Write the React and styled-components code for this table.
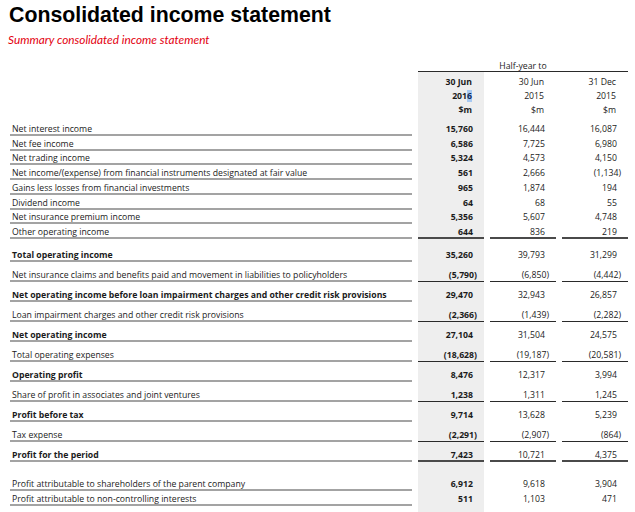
import React from 'react';
import styled, { createGlobalStyle } from 'styled-components';

const Global = createGlobalStyle`
  html, body { margin: 0; padding: 0; background: #fff; }
  body { font-family: "Open Sans", Lato, sans-serif; color: #1b1b1b; }
`;

const Page = styled.div`
  width: 635px;
  height: 512px;
  overflow: hidden;
  display: flex;
  flex-direction: column;
`;

const Title = styled.h1`
  margin: 5px 0 0 9px;
  font-family: "Liberation Sans", Arial, sans-serif;
  font-weight: 700;
  font-size: 21.3px;
  line-height: 21px;
  color: #000;
`;

const Subtitle = styled.div`
  margin: 7px 0 0 8px;
  font-family: Lato, sans-serif;
  font-style: italic;
  font-size: 11.8px;
  line-height: 14px;
  color: #e3000f;
`;

const Table = styled.div`
  display: flex;
  flex-direction: column;
  padding-left: 10px;
  margin-top: 9px;
  flex: 1;
`;

const Row = styled.div`
  display: flex;
  height: ${(p) => p.$h}px;
  flex: ${(p) => (p.$fill ? '1' : 'none')};
  font-size: 8.7px;
  line-height: 12px;
`;

const Label = styled.div`
  width: 402px;
  margin-right: 6px;
  padding: 0 0 1px 2px;
  box-sizing: border-box;
  display: flex;
  align-items: flex-end;
  font-weight: ${(p) => (p.$bold ? 700 : 400)};
  box-shadow: ${(p) => (p.$line ? 'inset 0 -2px 0 #a3a3a3' : 'none')};
  white-space: nowrap;
`;

const Spacer = styled.div`
  width: 402px;
  margin-right: 6px;
`;

const Cell = styled.div`
  width: 72px;
  padding-right: 6px;
  box-sizing: border-box;
  display: flex;
`;

const Inner = styled.div`
  flex: 1;
  display: flex;
  align-items: ${(p) => (p.$center ? 'center' : 'flex-end')};
  justify-content: flex-end;
  padding: 0 ${(p) => p.$pr}px ${(p) => (p.$center ? 0 : 1)}px 0;
  background: ${(p) => (p.$shade ? '#eeeeee' : 'transparent')};
  font-weight: ${(p) => (p.$bold ? 700 : 400)};
  box-shadow: ${(p) =>
    p.$rule === 'heavy'
      ? 'inset 0 -2px 0 #4a4a4a'
      : p.$rule === 'thin'
      ? 'inset 0 -1px 0 #2a2a2a'
      : 'none'};
  white-space: nowrap;
`;

const SpanHead = styled.div`
  width: 210px;
  display: flex;
  align-items: flex-end;
  justify-content: center;
  box-sizing: border-box;
  box-shadow: inset 0 -1px 0 #2a2a2a;
`;

const Sel = styled.span`
  background: #a7c9f2;
  color: #0e2a5c;
`;

const group1 = [
  ['Net interest income', '15,760', '16,444', '16,087'],
  ['Net fee income', '6,586', '7,725', '6,980'],
  ['Net trading income', '5,324', '4,573', '4,150'],
  ['Net income/(expense) from financial instruments designated at fair value', '561', '2,666', '(1,134)'],
  ['Gains less losses from financial investments', '965', '1,874', '194'],
  ['Dividend income', '64', '68', '55'],
  ['Net insurance premium income', '5,356', '5,607', '4,748'],
  ['Other operating income', '644', '836', '219', 'heavy'],
];

const group2 = [
  ['Total operating income', '35,260', '39,793', '31,299', null, true, 23],
  ['Net insurance claims and benefits paid and movement in liabilities to policyholders', '(5,790)', '(6,850)', '(4,442)', 'thin'],
  ['Net operating income before loan impairment charges and other credit risk provisions', '29,470', '32,943', '26,857', null, true],
  ['Loan impairment charges and other credit risk provisions', '(2,366)', '(1,439)', '(2,282)', 'thin'],
  ['Net operating income', '27,104', '31,504', '24,575', null, true],
  ['Total operating expenses', '(18,628)', '(19,187)', '(20,581)', 'thin'],
  ['Operating profit', '8,476', '12,317', '3,994', null, true],
  ['Share of profit in associates and joint ventures', '1,238', '1,311', '1,245', 'thin'],
  ['Profit before tax', '9,714', '13,628', '5,239', null, true],
  ['Tax expense', '(2,291)', '(2,907)', '(864)', 'thin'],
  ['Profit for the period', '7,423', '10,721', '4,375', 'heavy', true],
];

const group3 = [
  ['Profit attributable to shareholders of the parent company', '6,912', '9,618', '3,904'],
  ['Profit attributable to non-controlling interests', '511', '1,103', '471'],
];

function DataRow({ row, h }) {
  const [label, a, b, c, rule, bold, hh] = row;
  return (
    <Row $h={hh || h}>
      <Label $bold={bold} $line>{label}</Label>
      {[a, b, c].map((v, i) => (
        <Cell key={i}>
          <Inner
            $shade={i === 0}
            $bold={i === 0}
            $rule={rule}
            $pr={v.startsWith('(') ? 7 : 11}
          >
            {v}
          </Inner>
        </Cell>
      ))}
    </Row>
  );
}

function HeadRow({ cells, h }) {
  return (
    <Row $h={h}>
      <Spacer />
      {cells.map((v, i) => (
        <Cell key={i}>
          <Inner $shade={i === 0} $bold={i === 0} $pr={12} $center>
            {v}
          </Inner>
        </Cell>
      ))}
    </Row>
  );
}

function GapRow({ h, fill }) {
  return (
    <Row $h={h} $fill={fill}>
      <Spacer />
      {[0, 1, 2].map((i) => (
        <Cell key={i}>
          <Inner $shade={i === 0} $pr={0} />
        </Cell>
      ))}
    </Row>
  );
}

export default function App() {
  return (
    <Page>
      <Global />
      <Title>Consolidated income statement</Title>
      <Subtitle>Summary consolidated income statement</Subtitle>
      <Table>
        <Row $h={16}>
          <Spacer />
          <SpanHead>Half-year to</SpanHead>
        </Row>
        <GapRow h={3} />
        <HeadRow h={14} cells={['30 Jun', '30 Jun', '31 Dec']} />
        <HeadRow h={14} cells={[<>201<Sel>6</Sel></>, '2015', '2015']} />
        <HeadRow h={14} cells={['$m', '$m', '$m']} />
        <GapRow h={4.4} />
        {group1.map((r, i) => (
          <DataRow key={i} row={r} h={14.7} />
        ))}
        {group2.map((r, i) => (
          <DataRow key={i} row={r} h={20} />
        ))}
        <GapRow h={14.3} />
        {group3.map((r, i) => (
          <DataRow key={i} row={r} h={14.7} />
        ))}
        <GapRow fill />
      </Table>
    </Page>
  );
}
